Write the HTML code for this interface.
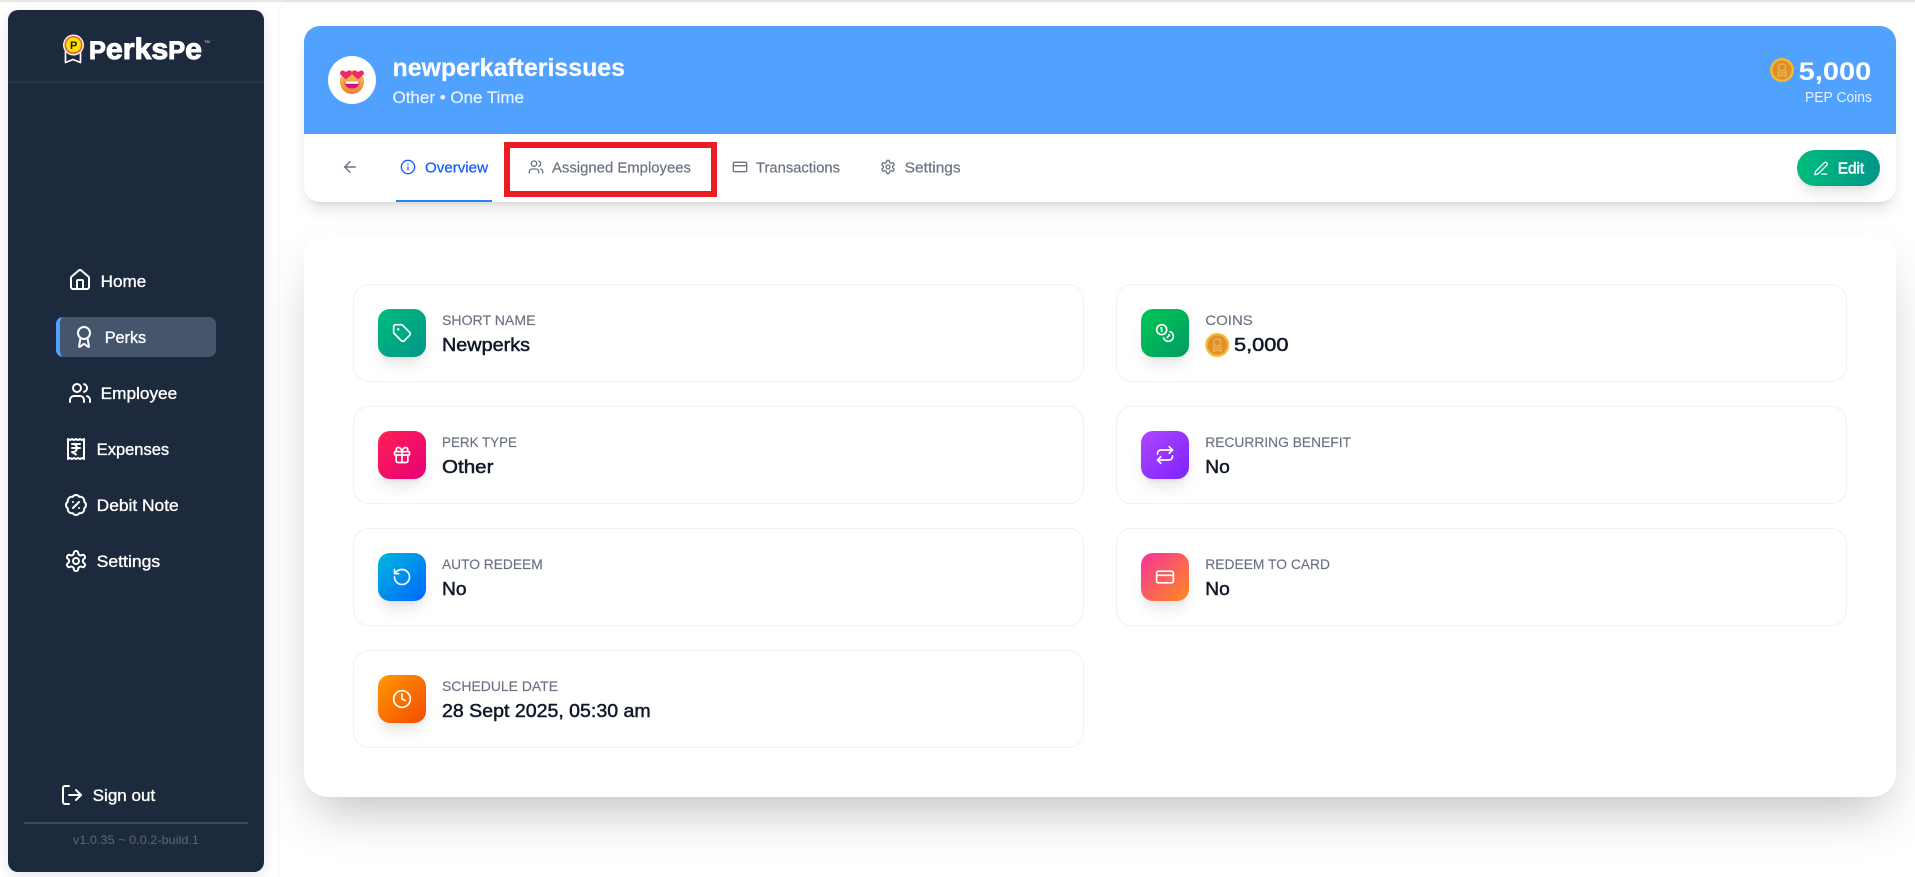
<!DOCTYPE html>
<html lang="en">
<head>
<meta charset="utf-8">
<title>Perkspe</title>
<style>
html,body{margin:0;padding:0;width:1915px;height:877px;overflow:hidden;background:#fff;font-family:"Liberation Sans",sans-serif}
.b{position:absolute;box-sizing:border-box}
#strip{left:0;top:0;width:1915px;height:2px;background:#e6e6e6}
#side{left:8px;top:10px;width:256px;height:862px;background:#1d293d;border-radius:10px;box-shadow:0 4px 14px rgba(0,0,0,.10)}
#main{left:280px;top:3px;width:1635px;height:874px;background:#fff;border-radius:12px 0 0 0;box-shadow:0 0 6px rgba(0,0,0,.05);overflow:hidden}
#hdr{left:304px;top:26px;width:1592px;height:176px;background:#fff;border-radius:16px;box-shadow:0 10px 16px -3px rgba(0,0,0,.12),0 4px 6px -4px rgba(0,0,0,.1);overflow:hidden}
#blue{left:0;top:0;width:1592px;height:108px;background:#51a2ff}
#panel{left:304px;top:234px;width:1592px;height:563px;background:#fff;border-radius:24px;box-shadow:0 25px 50px -12px rgba(0,0,0,.25)}
.c{width:731px;height:98px;background:#fff;border:1px solid #f0f1f3;border-radius:16px}
.i{width:48px;height:48px;border-radius:12px;box-shadow:0 10px 15px -3px rgba(0,0,0,.1),0 4px 6px -4px rgba(0,0,0,.1)}
#act{left:56px;top:317px;width:160px;height:40px;background:#45556c;border-left:4px solid #51a2ff;border-radius:7px}
#edit{left:1797px;top:150px;width:83px;height:36px;border-radius:18px;background:linear-gradient(90deg,#00bc7d,#009689);box-shadow:0 10px 15px -3px rgba(0,0,0,.1),0 4px 6px -4px rgba(0,0,0,.1)}
#red{left:504px;top:142px;width:213px;height:55px;border:6px solid #ed1c24}
#ul{left:396px;top:200px;width:96px;height:2px;background:#2b7fff}
#ov{position:absolute;left:0;top:0}
text{font-family:"Liberation Sans",sans-serif}
.nav{fill:#fff;font-size:16.5px;stroke:#fff;stroke-width:.35px}
.tab{fill:#6a7282;font-size:14.5px;stroke:#6a7282;stroke-width:.2px}
.lb{fill:#6a7282;font-size:14px;stroke:#6a7282;stroke-width:.15px}
.v{fill:#101828;font-size:18.5px;stroke:#101828;stroke-width:.5px}
.s{fill:none;stroke-width:2;stroke-linecap:round;stroke-linejoin:round}
</style>
</head>
<body>
<div class="b" id="strip"></div>
<div class="b" id="main"></div>
<div class="b" id="side"></div>
<div class="b" id="act"></div>
<div class="b" id="hdr"><div class="b" id="blue"></div></div>
<div class="b" id="ul"></div>
<div class="b" id="edit"></div>
<div class="b" id="panel"></div>

<div class="b c" style="left:353px;top:284px"></div>
<div class="b c" style="left:353px;top:406px"></div>
<div class="b c" style="left:353px;top:528px"></div>
<div class="b c" style="left:353px;top:650px"></div>
<div class="b c" style="left:1116px;top:284px"></div>
<div class="b c" style="left:1116px;top:406px"></div>
<div class="b c" style="left:1116px;top:528px"></div>

<div class="b i" style="left:378px;top:309px;background:linear-gradient(135deg,#00bc7d,#009689)"></div>
<div class="b i" style="left:378px;top:431px;background:linear-gradient(135deg,#ff2056,#e60076)"></div>
<div class="b i" style="left:378px;top:553px;background:linear-gradient(135deg,#00b8db,#0066ff)"></div>
<div class="b i" style="left:378px;top:675px;background:linear-gradient(135deg,#fe9a00,#f54900)"></div>
<div class="b i" style="left:1141px;top:309px;background:linear-gradient(135deg,#00c950,#009966)"></div>
<div class="b i" style="left:1141px;top:431px;background:linear-gradient(135deg,#ad46ff,#7f22fe)"></div>
<div class="b i" style="left:1141px;top:553px;background:linear-gradient(135deg,#f6339a,#ff8a1f)"></div>
<div class="b" id="red"></div>

<svg id="ov" width="1915" height="877" viewBox="0 0 1915 877" xmlns="http://www.w3.org/2000/svg">
<defs>
<linearGradient id="face" x1="0" y1="0" x2="0" y2="1"><stop offset="0" stop-color="#fdc84e"/><stop offset="1" stop-color="#ee8236"/></linearGradient>
<symbol id="home" viewBox="0 0 24 24"><path d="M15 21v-8a1 1 0 0 0-1-1h-4a1 1 0 0 0-1 1v8"/><path d="M3 10a2 2 0 0 1 .709-1.528l7-5.999a2 2 0 0 1 2.582 0l7 5.999A2 2 0 0 1 21 10v9a2 2 0 0 1-2 2H5a2 2 0 0 1-2-2z"/></symbol>
<symbol id="award" viewBox="0 0 24 24"><path d="m15.477 12.89 1.515 8.526a.5.5 0 0 1-.81.47l-3.58-2.687a1 1 0 0 0-1.197 0l-3.586 2.686a.5.5 0 0 1-.81-.469l1.514-8.526"/><circle cx="12" cy="8" r="6"/></symbol>
<symbol id="users" viewBox="0 0 24 24"><path d="M16 21v-2a4 4 0 0 0-4-4H6a4 4 0 0 0-4 4v2"/><circle cx="9" cy="7" r="4"/><path d="M22 21v-2a4 4 0 0 0-3-3.87"/><path d="M16 3.13a4 4 0 0 1 0 7.75"/></symbol>
<symbol id="receipt" viewBox="0 0 24 24"><path d="M4 2v20l2-1 2 1 2-1 2 1 2-1 2 1 2-1 2 1V2l-2 1-2-1-2 1-2-1-2 1-2-1-2 1Z"/><path d="M8 7h8"/><path d="M12 17.5 8 15h1a4 4 0 0 0 0-8"/><path d="M8 11h8"/></symbol>
<symbol id="badge" viewBox="0 0 24 24"><path d="M3.85 8.62a4 4 0 0 1 4.78-4.77 4 4 0 0 1 6.74 0 4 4 0 0 1 4.78 4.78 4 4 0 0 1 0 6.74 4 4 0 0 1-4.77 4.78 4 4 0 0 1-6.75 0 4 4 0 0 1-4.78-4.77 4 4 0 0 1 0-6.76Z"/><path d="m15 9-6 6"/><path d="M9 9h.01"/><path d="M15 15h.01"/></symbol>
<symbol id="gear" viewBox="0 0 24 24"><path d="M12.22 2h-.44a2 2 0 0 0-2 2v.18a2 2 0 0 1-1 1.73l-.43.25a2 2 0 0 1-2 0l-.15-.08a2 2 0 0 0-2.73.73l-.22.38a2 2 0 0 0 .73 2.73l.15.1a2 2 0 0 1 1 1.72v.51a2 2 0 0 1-1 1.74l-.15.09a2 2 0 0 0-.73 2.73l.22.38a2 2 0 0 0 2.73.73l.15-.08a2 2 0 0 1 2 0l.43.25a2 2 0 0 1 1 1.73V20a2 2 0 0 0 2 2h.44a2 2 0 0 0 2-2v-.18a2 2 0 0 1 1-1.73l.43-.25a2 2 0 0 1 2 0l.15.08a2 2 0 0 0 2.73-.73l.22-.39a2 2 0 0 0-.73-2.73l-.15-.08a2 2 0 0 1-1-1.74v-.5a2 2 0 0 1 1-1.74l.15-.09a2 2 0 0 0 .73-2.73l-.22-.38a2 2 0 0 0-2.73-.73l-.15.08a2 2 0 0 1-2 0l-.43-.25a2 2 0 0 1-1-1.73V4a2 2 0 0 0-2-2z"/><circle cx="12" cy="12" r="3"/></symbol>
<symbol id="logout" viewBox="0 0 24 24"><path d="M9 21H5a2 2 0 0 1-2-2V5a2 2 0 0 1 2-2h4"/><path d="m16 17 5-5-5-5"/><path d="M21 12H9"/></symbol>
<symbol id="arrow" viewBox="0 0 24 24"><path d="m12 19-7-7 7-7"/><path d="M19 12H5"/></symbol>
<symbol id="info" viewBox="0 0 24 24"><circle cx="12" cy="12" r="10"/><path d="M12 16v-4"/><path d="M12 8h.01"/></symbol>
<symbol id="ccard" viewBox="0 0 24 24"><rect x="2" y="5" width="20" height="14" rx="2"/><line x1="2" y1="10" x2="22" y2="10"/></symbol>
<symbol id="pen" viewBox="0 0 24 24"><path d="M13 21h8"/><path d="M21.174 6.812a1 1 0 0 0-3.986-3.987L3.842 16.174a2 2 0 0 0-.5.83l-1.321 4.352a.5.5 0 0 0 .623.622l4.353-1.32a2 2 0 0 0 .83-.497z"/></symbol>
<symbol id="tag" viewBox="0 0 24 24"><path d="M12.586 2.586A2 2 0 0 0 11.172 2H4a2 2 0 0 0-2 2v7.172a2 2 0 0 0 .586 1.414l8.704 8.704a2.426 2.426 0 0 0 3.42 0l6.58-6.58a2.426 2.426 0 0 0 0-3.42z"/><circle cx="7.5" cy="7.5" r=".5" fill="#fff"/></symbol>
<symbol id="gift" viewBox="0 0 24 24"><rect x="3" y="8" width="18" height="4" rx="1"/><path d="M12 8v13"/><path d="M19 12v7a2 2 0 0 1-2 2H7a2 2 0 0 1-2-2v-7"/><path d="M7.5 8a2.5 2.5 0 0 1 0-5A4.8 8 0 0 1 12 8a4.8 8 0 0 1 4.5-5 2.5 2.5 0 0 1 0 5"/></symbol>
<symbol id="ccw" viewBox="0 0 24 24"><path d="M3 12a9 9 0 1 0 9-9 9.75 9.75 0 0 0-6.74 2.74L3 8"/><path d="M3 3v5h5"/></symbol>
<symbol id="clock" viewBox="0 0 24 24"><circle cx="12" cy="12" r="10"/><path d="M12 6v6l4 2"/></symbol>
<symbol id="coins" viewBox="0 0 24 24"><circle cx="8" cy="8" r="6"/><path d="M18.09 10.37A6 6 0 1 1 10.34 18"/><path d="M7 6h1v4"/><path d="m16.71 13.88.7.71-2.82 2.82"/></symbol>
<symbol id="repeat" viewBox="0 0 24 24"><path d="m17 2 4 4-4 4"/><path d="M3 11v-1a4 4 0 0 1 4-4h14"/><path d="m7 22-4-4 4-4"/><path d="M21 13v1a4 4 0 0 1-4 4H3"/></symbol>
<symbol id="coin" viewBox="0 0 24 24"><circle cx="12" cy="12" r="12" fill="#f7b733"/><circle cx="12" cy="12" r="9.6" fill="#dd8f2e"/><circle cx="12" cy="9.4" r="3.6" fill="none" stroke="#f3b84a" stroke-width="1.2"/><path d="M8.2 12.5v6l3.8-1.6 3.8 1.6v-6" fill="none" stroke="#f3b84a" stroke-width="1.2"/><path d="M8.2 15h7.6" stroke="#f3b84a" stroke-width="1"/></symbol>
</defs>

<!-- logo -->
<line x1="8" y1="82" x2="264" y2="82" stroke="#314158" stroke-width="1"/>
<g>
<path d="M65.500 50v12.500l7.500-3 7.500 3V50" fill="#1d293d" stroke="#fff" stroke-width="1.700" stroke-linejoin="round"/>
<circle cx="73.500" cy="45" r="10.500" fill="#f5f5f0"/>
<circle cx="73.500" cy="45" r="9" fill="#f0592a"/>
<circle cx="73.500" cy="45" r="7.500" fill="#ffe000"/>
<text x="70" y="49" font-size="11" font-weight="700" fill="#1a1a1a">P</text>
</g>
<text x="89" y="59" textLength="113" lengthAdjust="spacingAndGlyphs" font-weight="700" font-size="30" fill="#fff" stroke="#fff" stroke-width="1"><tspan font-size="25">P</tspan>erks<tspan font-size="25">P</tspan>e</text>
<text x="204" y="43" font-size="4" fill="#dfe3e8">TM</text>

<!-- sidebar nav -->
<g class="s" stroke="#fff">
<use href="#home" x="68" y="268" width="24" height="24"/>
<use href="#award" x="72" y="325" width="24" height="24"/>
<use href="#users" x="68" y="381" width="24" height="24"/>
<use href="#receipt" x="64" y="437" width="24" height="24"/>
<use href="#badge" x="64" y="493" width="24" height="24"/>
<use href="#gear" x="64" y="549" width="24" height="24"/>
<use href="#logout" x="60" y="783" width="24" height="24"/>
</g>
<text class="nav" x="100.700" y="287" textLength="45.500" lengthAdjust="spacingAndGlyphs">Home</text>
<text class="nav" x="104.700" y="343" textLength="41.500" lengthAdjust="spacingAndGlyphs">Perks</text>
<text class="nav" x="100.700" y="399" textLength="76.500" lengthAdjust="spacingAndGlyphs">Employee</text>
<text class="nav" x="96.700" y="455" textLength="72.500" lengthAdjust="spacingAndGlyphs">Expenses</text>
<text class="nav" x="96.700" y="511" textLength="82" lengthAdjust="spacingAndGlyphs">Debit Note</text>
<text class="nav" x="96.700" y="567" textLength="63.500" lengthAdjust="spacingAndGlyphs">Settings</text>
<text class="nav" x="92.700" y="801" textLength="62.500" lengthAdjust="spacingAndGlyphs">Sign out</text>
<line x1="24" y1="823" x2="248" y2="823" stroke="#5b6779" stroke-width="1"/>
<text x="73" y="844" font-size="12" fill="#5c6879" textLength="126" lengthAdjust="spacingAndGlyphs">v1.0.35 ~ 0.0.2-build.1</text>

<!-- header -->
<circle cx="352" cy="80" r="24" fill="#fff"/>
<circle cx="352" cy="82" r="12" fill="url(#face)"/>
<path d="M344.500 81.500h15c0 .8-.1 7-7.500 7s-7.500-6.200-7.500-7z" fill="#c6187f"/>
<path d="M345.200 81.500h13.600c0 1-.2 1.700-.5 2.300h-12.600c-.3-.6-.5-1.300-.5-2.300z" fill="#fff"/>
<path d="M346 79.500l-5.200-4.600c-2.300-2.500 1-5.600 3.500-3.900l1.700 1.100 1.700-1.100c2.500-1.700 5.800 1.400 3.500 3.900z" fill="#ee2a6f"/>
<path d="M358 79.500l-5.200-4.600c-2.300-2.500 1-5.600 3.500-3.900l1.700 1.100 1.700-1.100c2.500-1.700 5.800 1.400 3.500 3.900z" fill="#ee2a6f"/>
<text x="392.500" y="76" font-size="25" font-weight="700" fill="#fff" stroke="#fff" stroke-width=".2" textLength="232.500" lengthAdjust="spacingAndGlyphs">newperkafterissues</text>
<text x="392.500" y="103" font-size="16.500" fill="#e8f2ff" stroke="#e8f2ff" stroke-width=".2" textLength="131.500" lengthAdjust="spacingAndGlyphs">Other • One Time</text>
<use href="#coin" x="1770" y="58" width="24" height="24"/>
<text x="1798.700" y="80" font-size="25" font-weight="700" fill="#fff" textLength="72.500" lengthAdjust="spacingAndGlyphs">5,000</text>
<text x="1805" y="102" font-size="14.500" fill="#e8f2ff" textLength="67" lengthAdjust="spacingAndGlyphs">PEP Coins</text>

<!-- tabs -->
<use href="#arrow" x="341" y="158" width="18" height="18" class="s" stroke="#6a7282"/>
<use href="#info" x="400" y="159" width="16" height="16" class="s" stroke="#155dfc"/>
<text x="425" y="172.700" font-size="14.500" fill="#155dfc" stroke="#155dfc" stroke-width=".25" textLength="63" lengthAdjust="spacingAndGlyphs">Overview</text>
<use href="#users" x="528" y="159" width="16" height="16" class="s" stroke="#6a7282"/>
<text class="tab" x="552" y="172.700" textLength="139" lengthAdjust="spacingAndGlyphs">Assigned Employees</text>
<use href="#ccard" x="732" y="159" width="16" height="16" class="s" stroke="#6a7282"/>
<text class="tab" x="756" y="172.700" textLength="84" lengthAdjust="spacingAndGlyphs">Transactions</text>
<use href="#gear" x="880" y="159" width="16" height="16" class="s" stroke="#6a7282"/>
<text class="tab" x="904.700" y="172.700" textLength="56" lengthAdjust="spacingAndGlyphs">Settings</text>
<use href="#pen" x="1813.500" y="161" width="15" height="15" class="s" stroke="#fff"/>
<text x="1837.700" y="173.300" font-size="15.500" fill="#fff" stroke="#fff" stroke-width=".5" textLength="26.500" lengthAdjust="spacingAndGlyphs">Edit</text>

<!-- card icons -->
<g class="s" stroke="#fff">
<use href="#tag" x="392" y="323" width="20" height="20"/>
<use href="#gift" x="392" y="445" width="20" height="20"/>
<use href="#ccw" x="392" y="567" width="20" height="20"/>
<use href="#clock" x="392" y="689" width="20" height="20"/>
<use href="#coins" x="1155" y="323" width="20" height="20"/>
<use href="#repeat" x="1155" y="445" width="20" height="20"/>
<use href="#ccard" x="1155" y="567" width="20" height="20"/>
</g>

<!-- card text -->
<text class="lb" x="442" y="325" textLength="93.500" lengthAdjust="spacingAndGlyphs">SHORT NAME</text>
<text class="v" x="442" y="351" textLength="88" lengthAdjust="spacingAndGlyphs">Newperks</text>
<text class="lb" x="442" y="447" textLength="75" lengthAdjust="spacingAndGlyphs">PERK TYPE</text>
<text class="v" x="442" y="473" textLength="51.500" lengthAdjust="spacingAndGlyphs">Other</text>
<text class="lb" x="442" y="569" textLength="100.700" lengthAdjust="spacingAndGlyphs">AUTO REDEEM</text>
<text class="v" x="442" y="595" textLength="24.500" lengthAdjust="spacingAndGlyphs">No</text>
<text class="lb" x="442" y="691" textLength="116" lengthAdjust="spacingAndGlyphs">SCHEDULE DATE</text>
<text class="v" x="442" y="717" textLength="208.700" lengthAdjust="spacingAndGlyphs">28 Sept 2025, 05:30 am</text>

<text class="lb" x="1205.300" y="325" textLength="47.500" lengthAdjust="spacingAndGlyphs">COINS</text>
<use href="#coin" x="1205.300" y="333" width="24" height="24"/>
<text class="v" x="1234" y="351" textLength="54.500" lengthAdjust="spacingAndGlyphs">5,000</text>
<text class="lb" x="1205.300" y="447" textLength="145.700" lengthAdjust="spacingAndGlyphs">RECURRING BENEFIT</text>
<text class="v" x="1205.300" y="473" textLength="24.500" lengthAdjust="spacingAndGlyphs">No</text>
<text class="lb" x="1205.300" y="569" textLength="124.700" lengthAdjust="spacingAndGlyphs">REDEEM TO CARD</text>
<text class="v" x="1205.300" y="595" textLength="24.500" lengthAdjust="spacingAndGlyphs">No</text>
</svg>
</body>
</html>
